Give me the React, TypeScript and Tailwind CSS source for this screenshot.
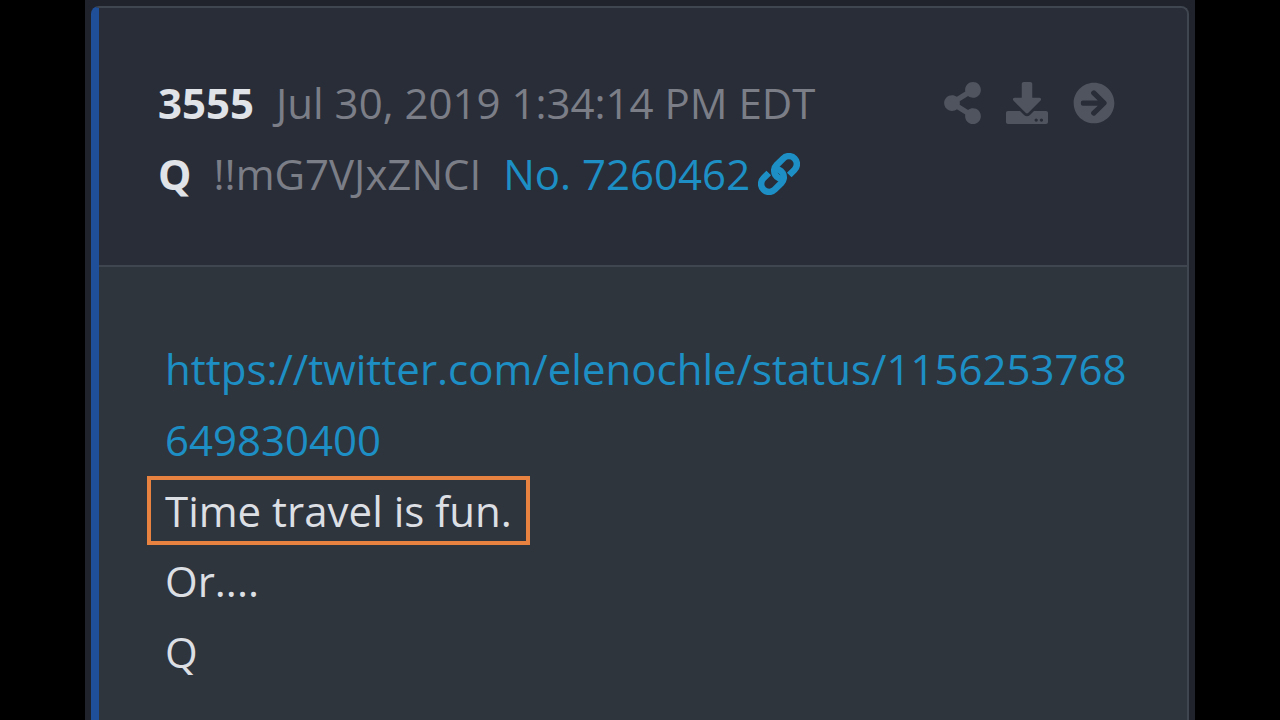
import { FaArrowCircleRight, FaDownload, FaShareAlt } from "react-icons/fa";

const post = {
  number: "3555",
  date: "Jul 30, 2019 1:34:14 PM EDT",
  name: "Q",
  trip: "!!mG7VJxZNCI",
  source: "No. 7260462",
  link: "https://twitter.com/elenochle/status/1156253768649830400",
};

function ChainIcon() {
  return (
    <svg viewBox="0 0 42 42" className="size-[42px]" fill="none" stroke="currentColor" strokeWidth="6.5" aria-hidden="true">
      <g transform="translate(21 21) rotate(-45)">
        <path d="M6.5 8H14a8 8 0 0 0 0-16H4.5a8 8 0 0 0-4 14.9" />
        <path d="M-6.5-8H-14a8 8 0 0 0 0 16H-4.5a8 8 0 0 0 4-14.9" />
      </g>
    </svg>
  );
}

function PostHeader() {
  return (
    <header className="flex items-start justify-between border-b-2 border-[#40464f] bg-[#292d37] pt-[59px] pr-[72px] pb-[56px] pl-[59px]">
      <div>
        <div className="flex h-[71px] items-center gap-[22px]">
          <b className="text-[#e0e3e8]">{post.number}</b>
          <time className="text-[#7b7e87]">{post.date}</time>
        </div>
        <div className="flex h-[71px] items-center gap-[22px]">
          <b className="text-[#e0e3e8]">{post.name}</b>
          <span className="text-[#7b7e87]">{post.trip}</span>
          <a href="#post" className="flex items-center gap-[8px] text-[#1d8fc4]">
            {post.source}
            <ChainIcon />
          </a>
        </div>
      </div>
      <div className="flex h-[71px] items-center gap-[25px] text-[#50545e]">
        <button type="button" aria-label="Share">
          <FaShareAlt className="h-[42px] w-[37px]" />
        </button>
        <button type="button" aria-label="Download">
          <FaDownload />
        </button>
        <button type="button" aria-label="Open post">
          <FaArrowCircleRight />
        </button>
      </div>
    </header>
  );
}

function PostBody() {
  return (
    <div className="flex-1 pt-[66px] pr-[58px] pl-[66px] leading-[71px] text-[#dcdfe4]">
      <a href={post.link} className="block break-all text-[#1d8fc4]">
        {post.link}
      </a>
      <p className="mt-px -ml-[18px] flex h-[69px] w-fit items-center border-4 border-[#e88240] px-[14px]">
        Time travel is fun.
      </p>
      <p>Or....</p>
      <p>Q</p>
    </div>
  );
}

export default function App() {
  return (
    <main className="h-screen overflow-hidden bg-black px-[85px] font-['Open_Sans','Noto_Sans',sans-serif] text-[42px]">
      <div className="h-full bg-[#20232c] px-[6px] pt-[6px]">
        <article className="flex h-full flex-col overflow-hidden rounded-t-lg border-t-2 border-r-2 border-l-8 border-t-[#40464f] border-r-[#40464f] border-l-[#204f9a] bg-[#2f353d]">
          <PostHeader />
          <PostBody />
        </article>
      </div>
    </main>
  );
}
